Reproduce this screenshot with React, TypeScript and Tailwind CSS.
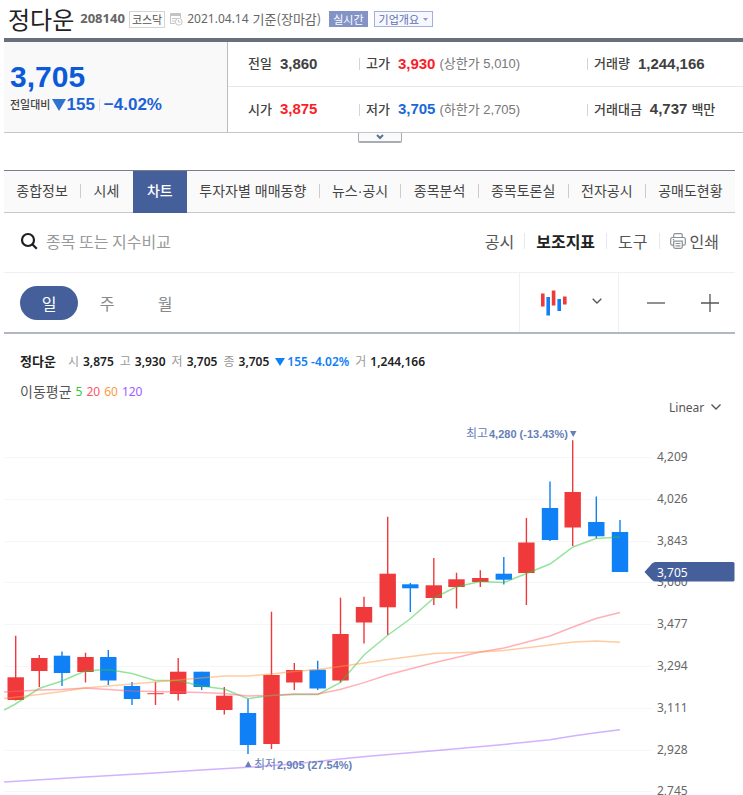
import { useState } from "react";
import clsx from "clsx";

type Tone = "up" | "down" | "flat";

interface QuoteItem {
  label: string;
  value: string;
  tone: Tone;
  note?: string;
  unit?: string;
}

const quoteRows: QuoteItem[][] = [
  [
    { label: "전일", value: "3,860", tone: "flat" },
    { label: "고가", value: "3,930", tone: "up", note: "(상한가 5,010)" },
    { label: "거래량", value: "1,244,166", tone: "flat" },
  ],
  [
    { label: "시가", value: "3,875", tone: "up" },
    { label: "저가", value: "3,705", tone: "down", note: "(하한가 2,705)" },
    { label: "거래대금", value: "4,737", tone: "flat", unit: "백만" },
  ],
];

const toneClass: Record<Tone, string> = {
  up: "text-[#fb1d27]",
  down: "text-[#1b68d8]",
  flat: "text-[#404040]",
};

const tabs = [
  "종합정보",
  "시세",
  "차트",
  "투자자별 매매동향",
  "뉴스·공시",
  "종목분석",
  "종목토론실",
  "전자공시",
  "공매도현황",
];

const periods = ["일", "주", "월"];

const summary = [
  { label: "시", value: "3,875" },
  { label: "고", value: "3,930" },
  { label: "저", value: "3,705" },
  { label: "종", value: "3,705" },
];

// x, high, low, body top, body bottom, rising
const candles: [number, number, number, number, number, boolean][] = [
  [15.7, 635.7, 700.5, 677.3, 700, true],
  [39.3, 655, 687, 658, 671, true],
  [62, 651.5, 686, 655.7, 673, false],
  [85.5, 652.7, 682.5, 657, 672, true],
  [108.3, 650, 685, 657, 680.5, false],
  [132, 682, 705, 686, 699, false],
  [155.5, 682, 705, 693.2, 694.2, true],
  [178.2, 658, 700.5, 671.7, 694, true],
  [201.7, 671.7, 690, 671.7, 687, false],
  [224.3, 687, 714.5, 695.7, 710, true],
  [248, 698.7, 754, 713, 745, false],
  [271.5, 611.7, 749, 675, 744, true],
  [294.3, 663, 690, 670, 682.5, true],
  [317.7, 660.7, 690, 669.7, 688.5, false],
  [340.5, 597.7, 682.5, 634, 680.5, true],
  [364, 596.7, 643.5, 607, 622.5, true],
  [387.7, 516.7, 635, 573.7, 607.3, true],
  [410.3, 583, 612, 584.3, 588.3, false],
  [433.8, 558, 605, 585.3, 598, true],
  [456.5, 572.7, 608.5, 579.3, 587, true],
  [480.3, 570.3, 587, 578, 582, true],
  [503.8, 557, 584.5, 573.7, 579.7, false],
  [526.4, 518, 605, 542.5, 573, true],
  [550, 481.5, 541, 508, 540, false],
  [572.7, 440.3, 546, 492, 527.5, true],
  [596.3, 496.5, 538.5, 522, 536.3, false],
  [620, 520, 572, 532, 572, false],
];

const averages = [
  {
    days: "5",
    color: "#2fc83a",
    text: "text-[#2fc83a]",
    points:
      "4,710 15.5,704 39,688.5 62,681 85,671 108,669.5 132,673.5 155,680.5 178,680.5 201,686 224,689 248,698.7 271,695.5 294,694.5 318,694.5 340.5,682.5 364,655 388,635 410,619 434,598 456,587 480,581.5 504,582.5 526.5,573.5 550,564 573,547 596,538.5 620,537",
  },
  {
    days: "20",
    color: "#ff6470",
    text: "text-[#ff5564]",
    points:
      "4,692 39,690 62,689.5 85,688 108,689.5 132,691 155,691.5 201,692.5 224,693.5 248,696 271,695.5 294,694 318,694 340,689.5 364,682.6 388,674.7 434,662.7 480,652 504,648 527,642 550,636 573,627 596,618.5 620,612.5",
  },
  {
    days: "60",
    color: "#fd9a45",
    text: "text-[#fd9a45]",
    points:
      "4,698.5 39,694.5 62,691.5 85,688 132,684 178,680 201,678 224,676 248,676 271,674 294,671.5 318,669.5 340,666.5 364,663 388,659.5 434,653.5 480,652 504,650.5 550,645 573,642 596,641 620,642.3",
  },
  {
    days: "120",
    color: "#a566ff",
    text: "text-[#a05cff]",
    points:
      "4,782 85,777 155,773 201,770 248,767.3 294,764 340,759 371,756 434,750.7 504,744.5 550,739.7 573,736 596,732.7 620,729.8",
  },
];

const gridLines = [
  { y: 457, label: "4,209" },
  { y: 499, label: "4,026" },
  { y: 541, label: "3,843" },
  { y: 582, label: "3,660" },
  { y: 624, label: "3,477" },
  { y: 666, label: "3,294" },
  { y: 708, label: "3,111" },
  { y: 750, label: "2,928" },
  { y: 791, label: "2,745" },
];

function ScheduleIcon() {
  return (
    <svg className="h-3.5 w-3.5" viewBox="0 0 14 14" fill="none" stroke="#c4c4c4">
      <path d="M6 11.5H1.5v-10h10V6" />
      <path d="M1.5 3h10" strokeWidth="2" />
      <path d="M3 6.5h5M3 9h3" />
      <circle cx="9.8" cy="9.8" r="3.4" fill="#fff" />
      <path d="M9.5 8v2h2" />
    </svg>
  );
}

function PrintIcon() {
  return (
    <svg className="h-4 w-4" viewBox="0 0 16 16" fill="none" stroke="#8b9098" strokeWidth="1.2">
      <path d="M3.7 4.5V2.2Q3.7.7 5.2.7h5.6q1.500 0 1.500 1.500v2.300" />
      <path d="M3.7 12.2H2.2Q.7 12.2.7 10.7V6q0-1.5 1.5-1.5h11.6q1.5 0 1.5 1.5v4.7q0 1.5-1.5 1.5h-1.5" />
      <path d="M3.7 8.2h8.6v5.6q0 1.5-1.5 1.5H5.2q-1.5 0-1.5-1.5z" />
      <path d="M5.5 10.5h5M5.5 12.8h5M2.8 6.5h1.4" />
    </svg>
  );
}

function CandleIcon() {
  return (
    <svg className="h-[26px] w-[26px]" viewBox="0 0 26 26">
      <path fill="#f0393b" d="M0 3.500h3.600v13H0zM10.800.5h3.600v15h-3.600zM22 6.500h3.600v8H22z" />
      <path fill="#0f80f5" d="M5.400 7h3.600v18.500H5.400zM16.400 9h3.600v12h-3.600z" />
    </svg>
  );
}

function StockHeader() {
  return (
    <header className="flex h-[38px] items-center pl-1 whitespace-nowrap">
      <h1 className="text-2xl leading-none text-[#222]">정다운</h1>
      <span className="ml-1.5 font-['Noto_Sans'] text-[13px] font-bold text-[#666]">208140</span>
      <span className="mx-1 border border-[#d4d4d4] px-0.5 text-[11px] leading-[15px] text-[#555]">
        코스닥
      </span>
      <ScheduleIcon />
      <span className="ml-1 font-['Noto_Sans'] text-xs text-[#666]">2021.04.14</span>
      <span className="ml-1 text-[13px] text-[#666]">기준(장마감)</span>
      <button className="ml-2 h-4 bg-[#8493c6] px-1 text-[11px] leading-4 text-white">실시간</button>
      <button className="ml-1.5 flex h-4 items-center gap-1 border border-[#a5b0d8] bg-[#f6f8fd] px-1 text-[11px] leading-none text-[#5f70b4]">
        기업개요
        <svg className="h-[3px] w-[5px]" viewBox="0 0 5 3">
          <path d="M0 0h5L2.500 3z" fill="#8e9bcb" />
        </svg>
      </button>
    </header>
  );
}

function QuotePanel() {
  return (
    <section className="font-['Liberation_Sans','Noto_Sans_CJK_KR',sans-serif]">
      <div className="flex border-t-4 border-b border-t-[#68707d] border-b-[#c3c6ca]">
        <div className="flex w-56 shrink-0 flex-col justify-center border-r border-[#b9bcc0] bg-[#f9f9f9] pl-1.5">
          <p className="text-[30px] leading-9 font-bold text-[#0b5ad9]">3,705</p>
          <p className="flex items-center text-[17px] leading-5 font-bold text-[#1b62d6]">
            <span className="text-[11px] font-medium text-[#444]">전일대비</span>
            <svg className="ml-0.5 h-3 w-3.5" viewBox="0 0 14 12">
              <path d="M0 0h14L7 12z" fill="#2f72cf" />
            </svg>
            155
            <span className="mx-1 h-3 w-px bg-[#ddd]" />
            −4.02%
          </p>
        </div>
        <div className="flex-1 divide-y divide-[#e8e8e8]">
          {quoteRows.map((row) => (
            <dl
              key={row[0].label}
              className="grid h-[45px] grid-cols-[111px_228px_1fr] items-center pl-5 whitespace-nowrap"
            >
              {row.map((item, i) => (
                <div key={item.label} className="flex items-center">
                  {i > 0 && <span className="mr-1.5 h-3 w-px bg-[#d5d5d5]" />}
                  <dt className="text-[13px] font-medium text-[#444]">{item.label}</dt>
                  <dd className="ml-2 flex items-center">
                    <span className={clsx("text-[15px] font-bold", toneClass[item.tone])}>
                      {item.value}
                    </span>
                    {item.note && <span className="ml-1 text-[13px] text-[#777]">{item.note}</span>}
                    {item.unit && (
                      <span className="ml-1 text-[13px] font-medium text-[#404040]">
                        {item.unit}
                      </span>
                    )}
                  </dd>
                </div>
              ))}
            </dl>
          ))}
        </div>
      </div>
      <button
        aria-label="시세 더보기"
        className="ml-[354px] flex h-2.5 w-11 items-center justify-center rounded-b-xs border border-t-0 border-b-2 border-[#a9adb2] bg-[#fafafa]"
      >
        <svg className="h-1.5 w-2" viewBox="0 0 8 6" fill="none" stroke="#5c7191" strokeWidth="2">
          <path d="M1 1l3 3 3-3" />
        </svg>
      </button>
    </section>
  );
}

function TabBar() {
  const [active, setActive] = useState("차트");

  return (
    <nav className="mt-[27px] flex h-[43px] border-t border-b border-t-[#777c90] border-b-[#c8c8c8] bg-[#fafafa] font-['Liberation_Sans','Noto_Sans_CJK_KR',sans-serif]">
      {tabs.map((tab, i) => {
        const next = tabs[i + 1];
        const divider = tab !== active && next !== active && i < tabs.length - 1;
        return (
          <a
            key={tab}
            href="#chart"
            onClick={() => setActive(tab)}
            className={clsx(
              "flex flex-auto items-center pb-0.5 text-sm whitespace-nowrap",
              tab === active ? "-mb-px bg-[#455f9b] px-0.5 font-medium text-white" : "text-[#444]"
            )}
          >
            <span className="flex-1 text-center">{tab}</span>
            {(divider || next === active) && (
              <span className={clsx("h-3.5 w-px", divider && "bg-[#ccc]")} />
            )}
          </a>
        );
      })}
    </nav>
  );
}

function SearchRow() {
  return (
    <div className="flex h-[60px] items-center border-b border-[#f0f0f2] pr-4 pb-1 pl-4 text-base">
      <label className="flex flex-1 items-center gap-2">
        <svg className="h-[18px] w-[18px]" viewBox="0 0 18 18" fill="none" stroke="#1d1f24" strokeWidth="2.200">
          <circle cx="8" cy="8" r="6" />
          <path d="M12.300 12.300L16.800 16.800" />
        </svg>
        <input
          type="text"
          aria-label="종목 검색"
          placeholder="종목 또는 지수비교"
          className="min-w-0 flex-1 outline-none placeholder:text-[#999]"
        />
      </label>
      <div className="flex items-center divide-x divide-[#e6e8ee] leading-4 text-[#555] whitespace-nowrap">
        <button className="pr-2.5">공시</button>
        <button className="px-[11px] font-bold text-[#222]">보조지표</button>
        <button className="px-[11px]">도구</button>
        <button className="flex items-center gap-1 pl-2.5">
          <PrintIcon />
          인쇄
        </button>
      </div>
    </div>
  );
}

function PeriodRow() {
  const [period, setPeriod] = useState("일");

  return (
    <div className="flex h-[61px] items-stretch border-b-2 border-[#b3b7bf]">
      <div className="flex flex-1 items-center pl-4 text-base">
        {periods.map((p) => (
          <button
            key={p}
            onClick={() => setPeriod(p)}
            className={clsx(
              "h-[34px] w-[58px] rounded-full",
              p === period ? "bg-[#455f9b] text-white" : "text-[#888]"
            )}
          >
            {p}
          </button>
        ))}
      </div>
      <button
        aria-label="차트 종류"
        className="flex w-[100px] items-center justify-between border-x border-[#eff0f4] pr-4 pl-[21px]"
      >
        <CandleIcon />
        <svg className="mb-1 h-1.5 w-2.5" viewBox="0 0 10 6" fill="none" stroke="#555" strokeWidth="1.300">
          <path d="M.7.7L5 5l4.300-4.300" />
        </svg>
      </button>
      <div className="flex w-[116px] items-center justify-between pr-4 pl-7">
        <button aria-label="축소">
          <svg className="h-[18px] w-[18px]" viewBox="0 0 18 18" stroke="#555" strokeWidth="1.300">
            <path d="M0 9h18" />
          </svg>
        </button>
        <button aria-label="확대">
          <svg className="h-[18px] w-[18px]" viewBox="0 0 18 18" stroke="#555" strokeWidth="1.300">
            <path d="M0 9h18M9 0v18" />
          </svg>
        </button>
      </div>
    </div>
  );
}

function ChartLegend() {
  return (
    <div className="pt-[18px] pl-4 font-['Noto_Sans','Noto_Sans_CJK_KR',sans-serif]">
      <div className="flex h-5 items-center gap-1.5 text-xs whitespace-nowrap">
        <strong className="mr-1.5 text-[13px] text-[#222]">정다운</strong>
        {summary.map((s) => (
          <span key={s.label} className="flex items-center gap-1">
            <span className="text-[#999]">{s.label}</span>
            <b className="font-semibold text-[#222]">{s.value}</b>
          </span>
        ))}
        <span className="flex items-center gap-0.5 font-semibold text-[#0f80f5]">
          <svg className="h-2 w-2.5" viewBox="0 0 10 8">
            <path d="M0 0h10L5 8z" fill="#0f80f5" />
          </svg>
          155 -4.02%
        </span>
        <span className="flex items-center gap-1">
          <span className="text-[#999]">거</span>
          <b className="font-semibold text-[#222]">1,244,166</b>
        </span>
      </div>
      <div className="flex h-[46px] justify-between pt-2.5">
        <div className="flex h-5 items-center gap-1 text-xs">
          <span className="text-sm leading-5 text-[#555]">이동평균</span>
          {averages.map((a) => (
            <span key={a.days} className={a.text}>
              {a.days}
            </span>
          ))}
        </div>
        <div className="relative self-end text-[#555]">
          <select
            aria-label="축 종류"
            defaultValue="Linear"
            className="h-5 w-[66px] appearance-none text-xs outline-none"
          >
            <option>Linear</option>
            <option>Log</option>
          </select>
          <svg
            className="pointer-events-none absolute top-2.5 right-3.5 h-1.5 w-2.5"
            viewBox="0 0 10 6"
            fill="none"
            stroke="#555"
            strokeWidth="1.400"
          >
            <path d="M.5.5L5 5 9.500.5" />
          </svg>
        </div>
      </div>
    </div>
  );
}

function CandleChart() {
  return (
    <svg
      id="chart"
      className="block w-full font-['Noto_Sans','Noto_Sans_CJK_KR',sans-serif] text-xs"
      viewBox="4 418 731 377"
      role="img"
      aria-label="정다운 일봉 차트"
    >
      {gridLines.map((g) => (
        <g key={g.label}>
          <path d={`M4 ${g.y}.5H652`} stroke="#f5f6f8" />
          <text x="657" y={g.y + 4} fill="#666">
            {g.label}
          </text>
        </g>
      ))}

      {candles.map(([x, high, low, top, bottom, rising]) => {
        const color = rising ? "#f0393b" : "#0f80f5";
        return (
          <g key={x}>
            <path d={`M${x} ${high}V${low}`} stroke={color} strokeWidth="1.400" />
            <rect x={x - 8.2} y={top} width="16.400" height={bottom - top} fill={color} />
          </g>
        );
      })}

      {averages.map((a) => (
        <polyline
          key={a.days}
          points={a.points}
          fill="none"
          stroke={a.color}
          strokeOpacity="0.5"
          strokeWidth="1.500"
        />
      ))}

      <g fill="#6680b8">
        <text x="466" y="438">
          최고
        </text>
        <text x="489" y="438" className="font-['Liberation_Sans'] text-[11px] font-bold">
          4,280 (-13.43%)
        </text>
        <path d="M570 431h6.500L573.200 437z" />
        <path d="M245 767h6.500L248.200 761z" />
        <text x="254" y="769">
          최저
        </text>
        <text x="277" y="769" className="font-['Liberation_Sans'] text-[11px] font-bold">
          2,905 (27.54%)
        </text>
      </g>

      <path
        d="M644.500 572L652 563.500Q653.500 562 655.500 562H733Q734.500 562 734.500 563.500V580Q734.500 581.500 733 581.500H655.500Q653.500 581.500 652 580Z"
        fill="#455f9b"
      />
      <text x="657" y="577" fill="#fff">
        3,705
      </text>
    </svg>
  );
}

export default function App() {
  return (
    <main className="overflow-hidden bg-white pl-1 font-['Noto_Sans_CJK_KR',sans-serif]">
      <StockHeader />
      <QuotePanel />
      <div className="mr-2">
        <TabBar />
        <SearchRow />
        <PeriodRow />
        <ChartLegend />
        <CandleChart />
      </div>
    </main>
  );
}
